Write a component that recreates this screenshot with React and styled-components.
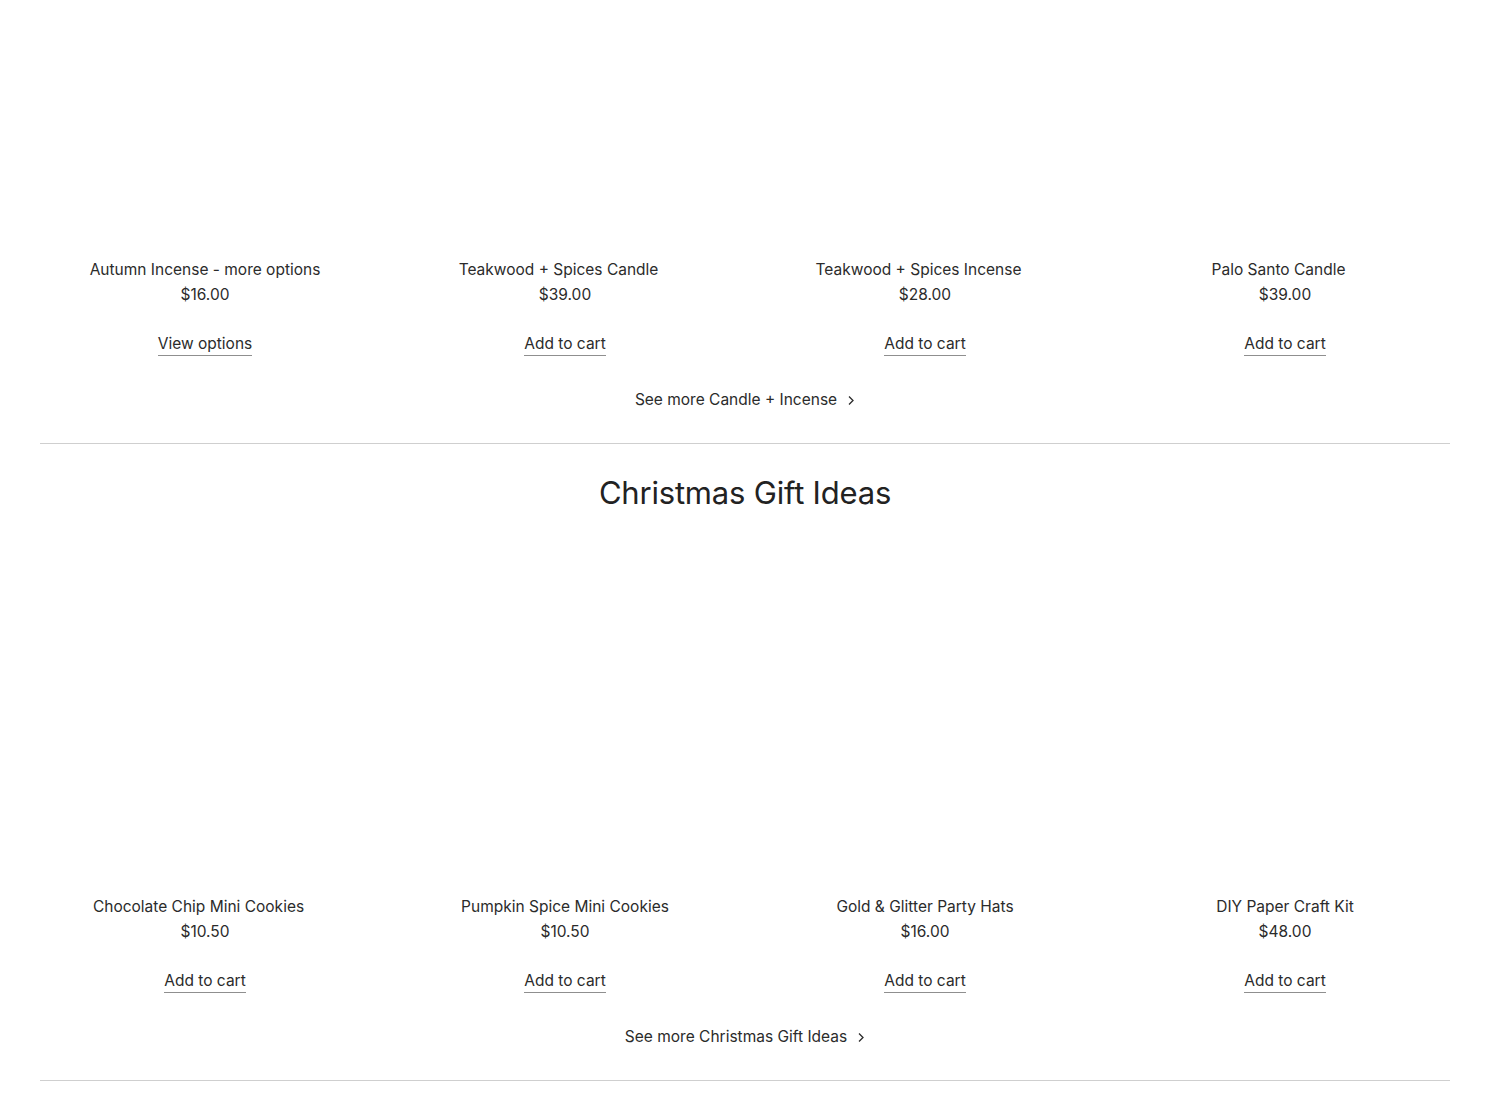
import styled, { createGlobalStyle } from 'styled-components'

const GlobalStyle = createGlobalStyle`
  html, body {
    margin: 0;
    padding: 0;
    background: #ffffff;
  }
  body {
    font-family: Inter, "Liberation Sans", sans-serif;
    color: #2b2b2b;
    overflow: hidden;
  }
`

const sections = [
  {
    title: null,
    more: 'See more Candle + Incense',
    products: [
      { name: 'Autumn Incense - more options', price: '$16.00', action: 'View options' },
      { name: 'Teakwood + Spices Candle', price: '$39.00', action: 'Add to cart', shift: true },
      { name: 'Teakwood + Spices Incense', price: '$28.00', action: 'Add to cart', shift: true },
      { name: 'Palo Santo Candle', price: '$39.00', action: 'Add to cart', shift: true },
    ],
  },
  {
    title: 'Christmas Gift Ideas',
    more: 'See more Christmas Gift Ideas',
    products: [
      { name: 'Chocolate Chip Mini Cookies', price: '$10.50', action: 'Add to cart', shift: true },
      { name: 'Pumpkin Spice Mini Cookies', price: '$10.50', action: 'Add to cart' },
      { name: 'Gold & Glitter Party Hats', price: '$16.00', action: 'Add to cart' },
      { name: 'DIY Paper Craft Kit', price: '$48.00', action: 'Add to cart' },
    ],
  },
]

const Chevron = () => (
  <svg width="8" height="11" viewBox="0 0 8 11" fill="none">
    <path d="M2 1.5 L6 5.5 L2 9.5" stroke="#2b2b2b" strokeWidth="1.3" />
  </svg>
)

export default function App() {
  return (
    <>
      <GlobalStyle />
      <Page>
        {sections.map((s, i) => (
          <Section key={i} first={i === 0}>
            {s.title && <Heading>{s.title}</Heading>}
            <Grid>
              {s.products.map((p) => (
                <Card key={p.name}>
                  <Thumb />
                  <Name shift={p.shift}>{p.name}</Name>
                  <Price>{p.price}</Price>
                  <Action>{p.action}</Action>
                </Card>
              ))}
            </Grid>
            <More>
              {s.more}
              <Chevron />
            </More>
          </Section>
        ))}
      </Page>
    </>
  )
}

const Page = styled.div`
  margin-top: -81px;
  padding: 0 40px;
`

const Section = styled.section`
  padding-top: ${(p) => (p.first ? '0' : '29px')};
  border-bottom: 1px solid #cfcfcf;
  display: flex;
  flex-direction: column;
  align-items: center;
`

const Heading = styled.h2`
  margin: 0 0 43px;
  font-size: 31px;
  line-height: 40px;
  font-weight: 400;
  color: #222;
  letter-spacing: -0.2px;
`

const Grid = styled.div`
  width: 100%;
  display: grid;
  grid-template-columns: repeat(4, 1fr);
  column-gap: 30px;
`

const Card = styled.div`
  display: flex;
  flex-direction: column;
  align-items: center;
`

const Thumb = styled.div`
  width: 100%;
  aspect-ratio: 1 / 1;
  background: #ffffff;
  margin-bottom: 10px;
`

const Name = styled.div`
  font-size: 15.5px;
  line-height: 22px;
  padding-right: ${(p) => (p.shift ? '13px' : '0')};
`

const Price = styled.div`
  font-size: 15.5px;
  line-height: 22px;
  margin-top: 3px;
`

const Action = styled.a`
  margin-top: 28px;
  font-size: 15.5px;
  line-height: 20px;
  color: #2b2b2b;
  text-decoration: none;
  border-bottom: 1px solid #8f8f8f;
  padding-bottom: 1px;
  cursor: pointer;
`

const More = styled.a`
  margin: 33px 0 32px;
  display: flex;
  align-items: center;
  gap: 10px;
  font-size: 15.5px;
  line-height: 22px;
  color: #2b2b2b;
  cursor: pointer;
`
